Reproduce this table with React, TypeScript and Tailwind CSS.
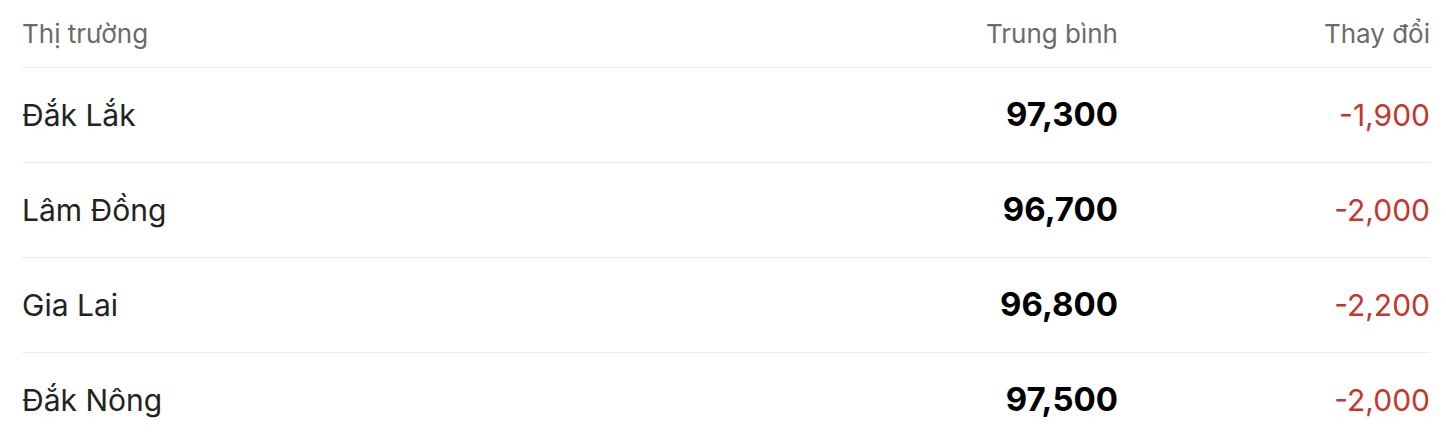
const rows = [
  { market: "Đắk Lắk", avg: "97,300", change: "-1,900" },
  { market: "Lâm Đồng", avg: "96,700", change: "-2,000" },
  { market: "Gia Lai", avg: "96,800", change: "-2,200" },
  { market: "Đắk Nông", avg: "97,500", change: "-2,000" },
];

export default function App() {
  return (
    <div className="bg-white w-[1446px] h-[437px] pl-[22px] pr-[16px] font-['Inter',sans-serif] overflow-hidden">
      <div className="flex items-center h-[68px] border-b border-[#ebebeb] text-[26px] text-[#6b6b6b]">
        <div className="flex-1">Thị trường</div>
        <div className="text-right">Trung bình</div>
        <div className="w-[312px] text-right">Thay đổi</div>
      </div>
      {rows.map((r) => (
        <div key={r.market} className="flex items-center h-[95px] border-b border-[#ebebeb]">
          <div className="flex-1 text-[30px] text-[#222222]">{r.market}</div>
          <div className="text-right text-[33px] font-bold text-black">{r.avg}</div>
          <div className="w-[312px] text-right text-[30px] text-[#c4372c]">{r.change}</div>
        </div>
      ))}
    </div>
  );
}
